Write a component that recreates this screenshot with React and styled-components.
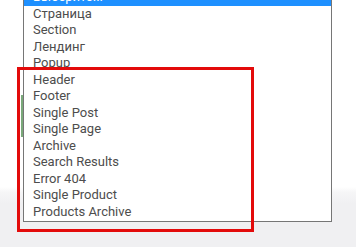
import React from 'react'
import styled, { createGlobalStyle } from 'styled-components'

const options = [
  'Выберите...',
  'Страница',
  'Section',
  'Лендинг',
  'Popup',
  'Header',
  'Footer',
  'Single Post',
  'Single Page',
  'Archive',
  'Search Results',
  'Error 404',
  'Single Product',
  'Products Archive',
]

function App() {
  return (
    <>
      <GlobalStyle />
      <Page>
        <GreenEdge />
        <ListBox>
          {options.map((label, i) => (
            <Option key={label} selected={i === 0}>
              {label}
            </Option>
          ))}
        </ListBox>
        <Highlight />
      </Page>
    </>
  )
}

export default App

const GlobalStyle = createGlobalStyle`
  html, body {
    margin: 0;
    padding: 0;
    background: #fff;
  }
  body {
    font-family: Roboto, "Noto Sans", sans-serif;
    overflow: hidden;
  }
`

const Page = styled.div`
  position: relative;
  width: 356px;
  height: 247px;
  overflow: hidden;
  background: linear-gradient(
    to bottom,
    #ffffff 0,
    #ffffff 187px,
    #f6f6f7 192px,
    #f0f0f2 204px,
    #f0f0f2 100%
  );
`

const ListBox = styled.div`
  box-sizing: border-box;
  width: 309px;
  margin: -12px 0 0 23px;
  padding: 0 0 1px;
  background: #fff;
  border: 1px solid #767676;
`

const Option = styled.div`
  height: 16.5px;
  line-height: 16.5px;
  padding-left: 9px;
  font-size: 13px;
  white-space: nowrap;
  color: ${p => (p.selected ? '#fff' : '#4d4d4d')};
  background: ${p => (p.selected ? '#1e90ff' : 'transparent')};
`

const GreenEdge = styled.div`
  position: absolute;
  left: 21px;
  top: 95px;
  width: 2px;
  height: 42px;
  background: #7aa97a;
`

const Highlight = styled.div`
  position: absolute;
  left: 17px;
  top: 67px;
  width: 237px;
  height: 165px;
  box-sizing: border-box;
  border: 3px solid #e30b0b;
  pointer-events: none;
`
